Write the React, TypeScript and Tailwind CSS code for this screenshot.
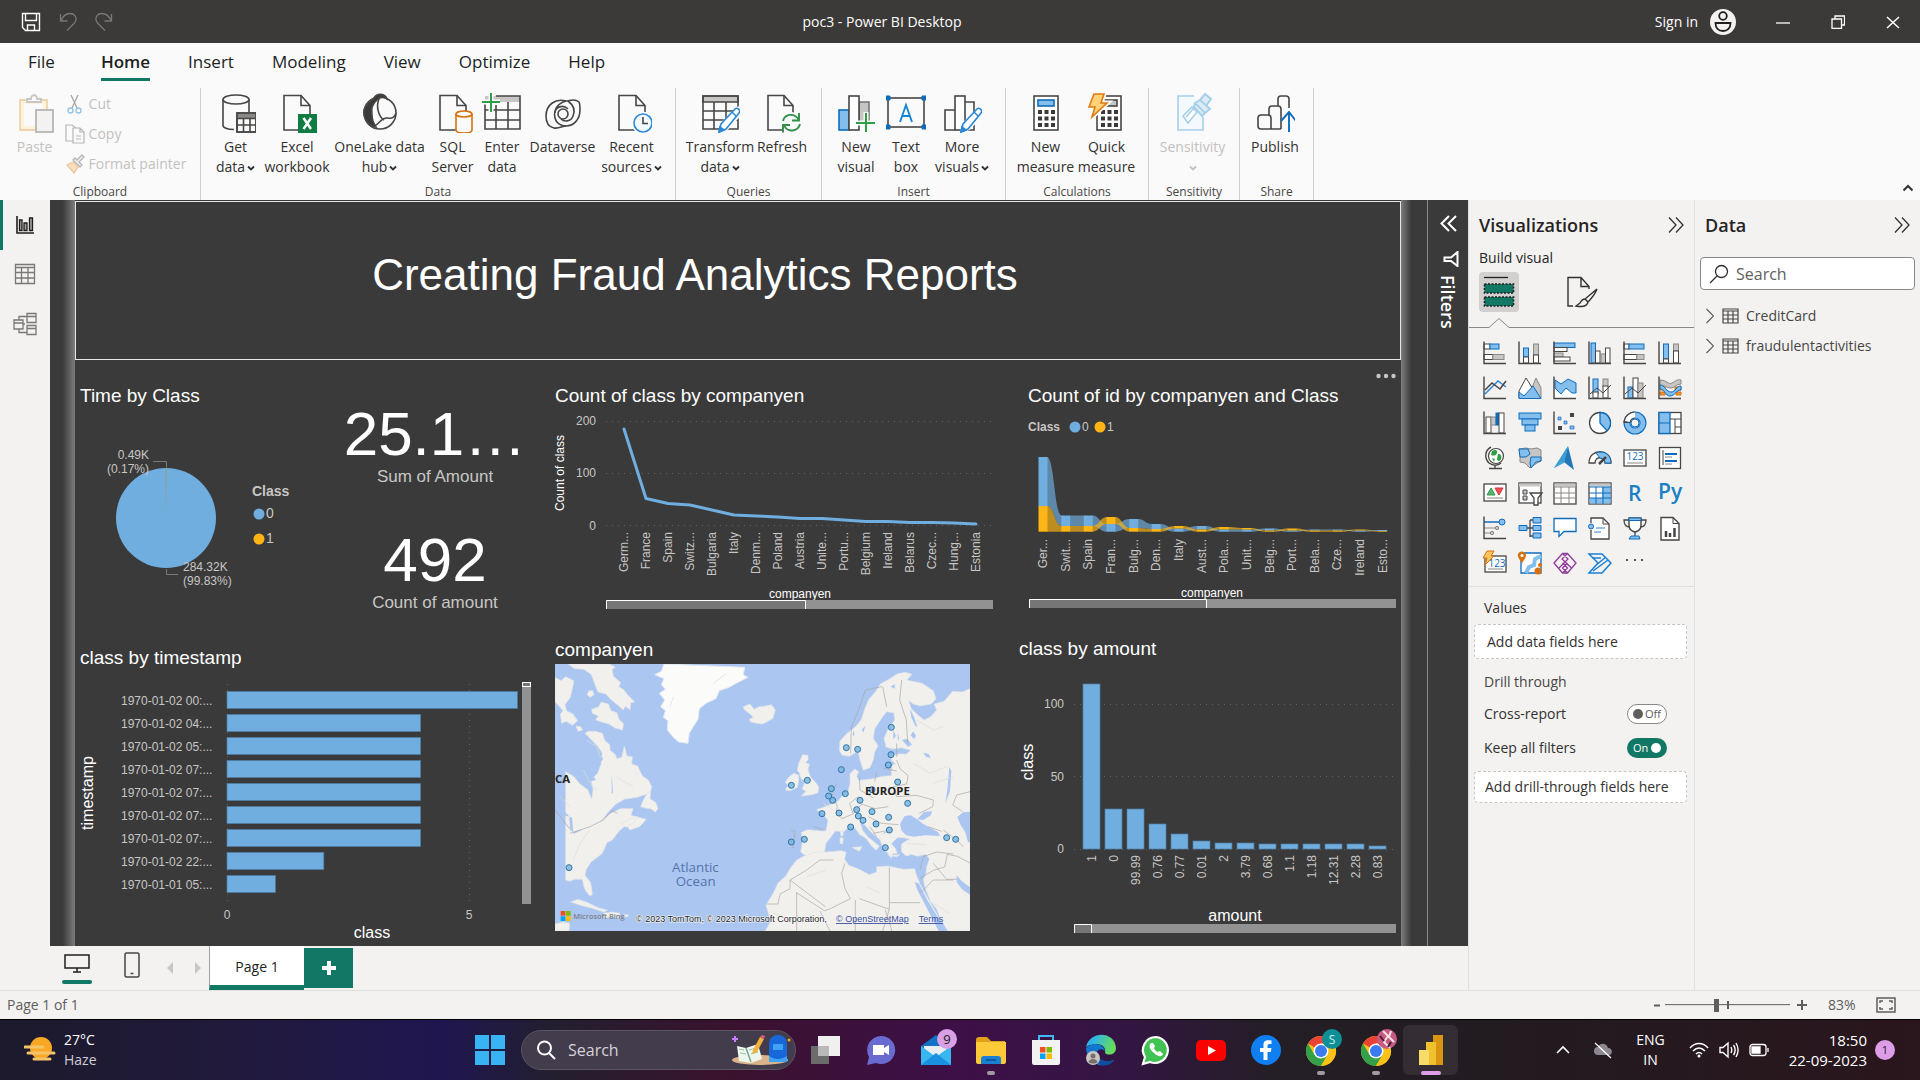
import React from "react";

type P = { children?: React.ReactNode };

const BLUE = "#70aee0";
const GOLD = "#fdb515";
const ARIAL = "'Liberation Sans', Arial, sans-serif";

/* ---------- Ribbon icons (40 x 40) ---------- */

function Ico({ children }: P) {
  return (
    <svg className="h-10 w-10" viewBox="0 0 40 40" fill="none" stroke="#484644" strokeWidth="1.6" aria-hidden="true">
      {children}
    </svg>
  );
}

const Doc = ({ fill = "#fafafa" }: { fill?: string }) => (
  <>
    <path d="M7 2.5h17l9 10V37H7z" fill={fill} />
    <path d="M24 2.5v10h9" />
  </>
);

const Pencil = () => (
  <>
    <path d="M20 39l2-8 15-15c2-2 6 1 4 4L27 35z" stroke="#fafafa" strokeWidth="3.5" fill="#fafafa" />
    <path d="M19 39l2-8L35 16c2-2 6 1 4 4L26 36z" stroke="#2b88d8" fill="#fff" />
    <path d="M19 39l1-5 4 3z" fill="#2b88d8" stroke="#2b88d8" />
    <path d="M32 19l4 4" stroke="#2b88d8" />
  </>
);

const icons: Record<string, React.ReactNode> = {
  get: (
    <Ico>
      <path d="M7 6.5v26c0 2 4 4 11 4M33 6.5V19" />
      <ellipse cx="20" cy="6.5" rx="13" ry="4.5" />
      <rect x="21" y="20" width="19" height="19" fill="#fafafa" />
      <path d="M21 23h19" strokeWidth="4" stroke="#8a8886" />
      <path d="M21 20h19v19H21zM21 25.5h19M21 32h19M27.5 25v14M34 25v14" />
    </Ico>
  ),
  excel: (
    <Ico>
      <Doc />
      <rect x="21" y="21" width="19" height="19" fill="#107c41" stroke="none" />
      <path d="M26.5 25l7.5 11M34 25l-7.5 11" stroke="#fff" strokeWidth="2.5" />
    </Ico>
  ),
  onelake: (
    <Ico>
      <circle cx="20" cy="20" r="16" />
      <path d="M14 5c3-5 11-5 13 1-3-2-7-2-10 1-5 4-6 9-5 15 0 5 2 9 4 12C6 33 1 20 6 13c2-3 5-5 8-8z" fill="#3b3a39" />
      <path d="M19 6c-3 7-1 17 5 21M14 33c7-2 6-9 14-8 4 1 7-1 8-5" />
    </Ico>
  ),
  sql: (
    <Ico>
      <Doc />
      <path d="M23 21v16c0 4 16 4 16 0V21" fill="#fafafa" stroke="#d8700f" />
      <ellipse cx="31" cy="21" rx="8" ry="3" stroke="#d8700f" fill="#fafafa" />
    </Ico>
  ),
  enter: (
    <Ico>
      <path d="M3 3h35v6H3z" fill="#c8c6c4" stroke="none" />
      <path d="M3 11v25h35V3H14M3 17h35M3 27h35M14 12v24M26 9v27" />
      <path d="M9 0v19M0 9h18" stroke="#fafafa" strokeWidth="5" />
      <path d="M9 0v19M0 9h18" stroke="#2f9e44" strokeWidth="2" />
    </Ico>
  ),
  dataverse: (
    <Ico>
      <path d="M36 9c-5-4-9-1-13-1C12 5 3 12 3 23c0 7 3 11 8 12 5 1 8-2 12-2 8 0 14-7 14-16 0-4 0-6-1-8z" />
      <circle cx="20" cy="21" r="5" />
      <path d="M23 8c-8 2-13 9-11 17 1 5 6 8 11 8M25 8c4 3 8 8 5 15-2 6-9 6-12 3M12 20c0-6 8-9 13-4" />
    </Ico>
  ),
  recent: (
    <Ico>
      <Doc />
      <circle cx="31" cy="30" r="10.5" fill="#fafafa" stroke="#fafafa" />
      <circle cx="31" cy="30" r="9" fill="#f3f9fd" stroke="#2b88d8" />
      <path d="M31 24v6.500h5" />
    </Ico>
  ),
  transform: (
    <Ico>
      <path d="M3 3h35v6H3z" fill="#c8c6c4" />
      <path d="M3 3h35v33H3zM3 18h35M3 27h35M14 9v27M26 9v27" />
      <Pencil />
    </Ico>
  ),
  refresh: (
    <Ico>
      <path d="M6 2.5h16l9 10V37H6z" />
      <path d="M22 2.5v10h9" />
      <circle cx="29" cy="30" r="11" fill="#fafafa" stroke="none" />
      <path d="M21 28c2-8 12-8 16-1M37 20v7.5h-7M38 31c-2 8-13 9-16 1M21 39.5V32h7" stroke="#2f8f46" strokeWidth="1.9" />
    </Ico>
  ),
  visual: (
    <Ico>
      <rect x="3" y="17" width="10" height="20" fill="#83beec" stroke="#0f6cbd" />
      <rect x="23" y="9" width="10" height="20" fill="#c8c6c4" stroke="#797775" />
      <rect x="13" y="3" width="10" height="34" fill="#fff" />
      <path d="M30 19v21M19 30h21" stroke="#fafafa" strokeWidth="5" />
      <path d="M30 20v19M20 30h19" stroke="#2f9e44" strokeWidth="2" />
    </Ico>
  ),
  text: (
    <Ico>
      <rect x="2" y="5" width="36" height="29" />
      <path d="M14 29l6-17 6 17M16 23h8" stroke="#1584d4" strokeWidth="1.9" />
      <path d="M0 3h4v4H0zM36 3h4v4h-4zM0 32h4v4H0zM36 32h4v4h-4z" fill="#0f6cbd" stroke="#0f6cbd" strokeWidth="1" />
    </Ico>
  ),
  more: (
    <Ico>
      <path d="M13 17H3v20h10M23 9h9v28h-9" />
      <rect x="13" y="3" width="10" height="34" fill="#fff" />
      <Pencil />
    </Ico>
  ),
  measure: (
    <Ico>
      <rect x="8" y="3" width="24" height="34" fill="#fff" />
      <rect x="12" y="7" width="16" height="6" fill="#83beec" stroke="#0f6cbd" />
      <path d="M12 19h4m2.500 0h4m2.500 0h4M12 25.500h4m2.500 0h4m2.500 0h4M12 32h4m2.500 0h4m2.500 0h4" strokeWidth="4" stroke="#3b3a39" />
    </Ico>
  ),
  quick: (
    <Ico>
      <rect x="10" y="3" width="24" height="34" fill="#fff" />
      <rect x="14" y="7" width="16" height="6" fill="#c8c6c4" />
      <path d="M14 19h4m2.500 0h4m2.500 0h4M14 25.500h4m2.500 0h4m2.500 0h4M14 32h4m2.500 0h4m2.500 0h4" strokeWidth="4" stroke="#3b3a39" />
      <path d="M7 1h10l-3 9h6L5 24l3-10H2z" fill="#fafafa" stroke="#fafafa" strokeWidth="5" />
      <path d="M7 1h10l-3 9h6L5 24l3-10H2z" fill="#ffd27a" stroke="#e07b12" />
    </Ico>
  ),
  sensitivity: (
    <Ico>
      <path d="M21 3H5v34h25V24" stroke="#a6cfe9" fill="#f3f9fd" />
      <path d="M10 23l9-9 5 5-9 11zM13 24l7-8" stroke="#a6cfe9" fill="#fff" />
      <path d="M22 10l5-3 10 9-5 4zM27 7l5-6 6 5-5 7M22 10l-1 4 8 9 3-3" stroke="#a6cfe9" strokeWidth="2" fill="#dcecf7" />
    </Ico>
  ),
  publish: (
    <Ico>
      <path d="M14 22v-6c0-2 1-3 3-3h6V6c0-2 1-3 3-3h5c2 0 3 1 3 3v9M23 13c2 0 3 1 3 3v20M3 25c0-2 1-3 3-3h7c2 0 3 1 3 3v11H6c-2 0-3-1-3-3zM16 36h10" />
      <path d="M34 39V20M26 28l8-9 7 9" stroke="#0f6cbd" strokeWidth="1.9" />
    </Ico>
  ),
};

const Caret = () => (
  <svg className="ml-0.5 inline-block h-2 w-2" viewBox="0 0 8 8" fill="none" stroke="currentColor" strokeWidth="1.8" aria-hidden="true">
    <path d="M1 2.500l3 3 3-3" />
  </svg>
);

function Tool({ icon, a, b, w, caret, off }: { icon: string; a: string; b?: string; w: string; caret?: boolean; off?: boolean }) {
  return (
    <button type="button" disabled={off} className={`${w} flex flex-col items-center text-center whitespace-nowrap ${off ? "text-[#c3c1bf]" : "text-[#323130]"}`}>
      {icons[icon]}
      <span className="mt-1 text-sm leading-5">
        {a}
        {(b || caret) && <br />}
        {b}
        {caret && <Caret />}
      </span>
    </button>
  );
}

function Group({ name, w, children }: { name: string; w: string; children: React.ReactNode }) {
  return (
    <section className={`${w} flex shrink-0 flex-col border-r border-[#d2d0ce]`}>
      <div className="flex flex-1 justify-center pt-[5px] pr-[3px]">{children}</div>
      <h2 className="text-center text-xs leading-4 text-[#484644]">{name}</h2>
    </section>
  );
}

function Ribbon() {
  return (
    <div className="flex h-[116px] items-start bg-[#fafafa] pt-1 shadow-[0_1px_0_#d2d0ce]">
      <div className="flex h-28 min-w-0">
        <Group name="Clipboard" w="w-[201px]">
          <button type="button" disabled className="flex w-12 flex-col items-center text-[#c3c1bf]">
            <svg className="h-10 w-10" viewBox="0 0 40 40" fill="none" strokeWidth="1.8" aria-hidden="true">
              <path d="M5 7h27v30H5z" stroke="#efd3ae" fill="#fdf3dc" />
              <path d="M9 11h19v22H9z" fill="#fafafa" stroke="none" />
              <path d="M12 9V6h4c0-5 6-5 6 0h4v3z" fill="#fafafa" stroke="#c8c6c4" />
              <rect x="21" y="17" width="17" height="22" fill="#f3f2f1" stroke="#b8b6b4" />
            </svg>
            <span className="mt-1 text-sm leading-5">Paste</span>
          </button>
          <div className="-mt-1 ml-1.5 flex flex-col text-sm leading-[30px] text-[#c3c1bf]">
            <button type="button" disabled className="flex items-center gap-1">
              <svg className="h-5 w-5" viewBox="0 0 20 20" fill="none" strokeWidth="1.3" aria-hidden="true">
                <path d="M6 1l6 13M13 1L7 14" stroke="#a8a6a4" />
                <circle cx="5.500" cy="16.500" r="2.500" stroke="#8fc3e6" />
                <circle cx="13.500" cy="16.500" r="2.500" stroke="#8fc3e6" />
              </svg>
              Cut
            </button>
            <button type="button" disabled className="flex items-center gap-1">
              <svg className="h-5 w-5" viewBox="0 0 20 20" fill="#fafafa" stroke="#b8b6b4" strokeWidth="1.2" aria-hidden="true">
                <path d="M1 1h6l4 3v13H1z" />
                <path d="M8 4h7l4 4v11H8zM15 4v4h4M11 12h5M11 15h5" />
              </svg>
              Copy
            </button>
            <button type="button" disabled className="flex items-center gap-1">
              <svg className="h-5 w-5" viewBox="0 0 20 20" fill="none" strokeWidth="1.3" aria-hidden="true">
                <path d="M2 11l6-3 5 5-4 6z" fill="#f9dfc0" stroke="#ecc79c" />
                <path d="M8 6l7 7 2-2-3-3 5-5-2-2-5 5-2-2z" fill="#eee" stroke="#b8b6b4" />
              </svg>
              Format painter
            </button>
          </div>
        </Group>
        <Group name="Data" w="w-[475px]">
          <Tool icon="get" a="Get" b="data" w="w-[58px]" caret />
          <Tool icon="excel" a="Excel" b="workbook" w="w-[65px]" />
          <Tool icon="onelake" a="OneLake data" b="hub" w="w-[100px]" caret />
          <Tool icon="sql" a="SQL" b="Server" w="w-[46px]" />
          <Tool icon="enter" a="Enter" b="data" w="w-[53px]" />
          <Tool icon="dataverse" a="Dataverse" w="w-[68px]" />
          <Tool icon="recent" a="Recent" b="sources" w="w-[70px]" caret />
        </Group>
        <Group name="Queries" w="w-[146px]">
          <Tool icon="transform" a="Transform" b="data" w="w-[70px]" caret />
          <Tool icon="refresh" a="Refresh" w="w-[54px]" />
        </Group>
        <Group name="Insert" w="w-[184px]">
          <Tool icon="visual" a="New" b="visual" w="w-[50px]" />
          <Tool icon="text" a="Text" b="box" w="w-[50px]" />
          <Tool icon="more" a="More" b="visuals" w="w-[62px]" caret />
        </Group>
        <Group name="Calculations" w="w-[143px]">
          <Tool icon="measure" a="New" b="measure" w="w-[62px]" />
          <Tool icon="quick" a="Quick" b="measure" w="w-[60px]" />
        </Group>
        <Group name="Sensitivity" w="w-[91px]">
          <Tool icon="sensitivity" a="Sensitivity" w="w-[70px]" caret off />
        </Group>
        <Group name="Share" w="w-[74px]">
          <Tool icon="publish" a="Publish" w="w-[60px]" />
        </Group>
      </div>
      <button type="button" aria-label="Collapse ribbon" className="mt-auto mr-1.5 mb-1.5 ml-auto">
        <svg className="h-3 w-3" viewBox="0 0 12 12" fill="none" stroke="#323130" strokeWidth="2" aria-hidden="true">
          <path d="M1.500 8.500L6 4l4.500 4.500" />
        </svg>
      </button>
    </div>
  );
}

function TitleBar() {
  return (
    <header className="grid h-[43px] shrink-0 grid-cols-[1fr_auto_1fr] items-center bg-[#3b3a39] text-sm text-white">
      <div className="flex items-center gap-[18px] pl-[21px]">
        <button type="button" aria-label="Save">
          <svg className="h-5 w-5" viewBox="0 0 20 20" fill="none" stroke="#fff" strokeWidth="1.4" aria-hidden="true">
            <path d="M1.500 1.500h17v17h-14l-3-3zM4.500 1.500v7h11v-7M6.500 18v-5h7v5" />
          </svg>
        </button>
        <button type="button" aria-label="Undo" disabled>
          <svg className="h-5 w-[18px]" viewBox="0 0 18 20" fill="none" stroke="#797775" strokeWidth="1.3" aria-hidden="true">
            <path d="M1.500 2v7h7M2 8.500C4 4 7 1.500 11 1.500c5 0 8 5 4.500 9.500L8 18.500" />
          </svg>
        </button>
        <button type="button" aria-label="Redo" disabled>
          <svg className="h-5 w-[18px]" viewBox="0 0 18 20" fill="none" stroke="#797775" strokeWidth="1.3" aria-hidden="true">
            <path d="M16.500 2v7h-7M16 8.500C14 4 11 1.500 7 1.500 2 1.500-1 6.500 2.500 11L10 18.500" />
          </svg>
        </button>
      </div>
      <h1 className="pr-[156px]">poc3 - Power BI Desktop</h1>
      <div className="flex items-center justify-end pr-5">
        <a href="#signin">Sign in</a>
        <svg className="ml-3 h-[26px] w-[26px]" viewBox="0 0 26 26" fill="none" stroke="#201f1e" strokeWidth="1.8" aria-hidden="true">
          <circle cx="13" cy="13" r="13" fill="#f3f2f1" stroke="none" />
          <circle cx="13" cy="7" r="3.8" />
          <path d="M5.500 14h15c0 5-3 8-7.500 8s-7.500-3-7.500-8z" />
        </svg>
        <button type="button" aria-label="Minimize" className="ml-10">
          <svg className="h-3.5 w-3.5" viewBox="0 0 14 14" stroke="#fff" strokeWidth="1.3" aria-hidden="true"><path d="M0 8h14" /></svg>
        </button>
        <button type="button" aria-label="Restore" className="ml-[41px]">
          <svg className="h-3.5 w-3.5" viewBox="0 0 14 14" fill="none" stroke="#fff" strokeWidth="1.3" aria-hidden="true">
            <path d="M1 4h9.500v9.500H1zM4 4V1h9.500v9H10.500" />
          </svg>
        </button>
        <button type="button" aria-label="Close" className="ml-[41px]">
          <svg className="h-3.5 w-3.5" viewBox="0 0 14 14" stroke="#fff" strokeWidth="1.5" aria-hidden="true"><path d="M1 2l12 11M13 2L1 13" /></svg>
        </button>
      </div>
    </header>
  );
}

function MenuTabs() {
  return (
    <nav className="flex h-[41px] shrink-0 items-start bg-[#fafafa] pl-7 text-[17px] leading-6 text-[#201f1e]">
      <a href="#file" className="mr-[46px] pt-[7px]">File</a>
      <div className="flex gap-[38px]">
        <a href="#home" aria-current="page" className="flex flex-col pt-[7px] font-semibold">
          Home
          <span className="mt-1 h-[3px] bg-[#117865]" />
        </a>
        {["Insert", "Modeling", "View", "Optimize", "Help"].map((t) => (
          <a key={t} href={`#${t}`} className="pt-[7px]">{t}</a>
        ))}
      </div>
    </nav>
  );
}

/* ---------- Charts: each viewBox uses the report's own coordinates ---------- */

const lab = { fontFamily: ARIAL, fontSize: 12, fill: "#c8c6c4" } as const;

function Title({ children, x }: { children: React.ReactNode; x: string }) {
  return <h2 className={`${x} pt-[22px] text-[19px] leading-7 text-white`}>{children}</h2>;
}

function Pie() {
  return (
    <svg className="block h-auto w-full" viewBox="75 410 250 212" role="img" aria-label="Time by Class pie chart">
      <circle cx="166" cy="518" r="50" fill={BLUE} />
      <path d="M166 518l-.6-50h1z" fill="#a09a6a" />
      <path d="M153 461.500h13.500v6M166.500 569v5.500H178" fill="none" stroke="#7a7876" />
      <g {...lab}>
        <text x="149" y="459" textAnchor="end">0.49K</text>
        <text x="149" y="473" textAnchor="end">(0.17%)</text>
        <text x="183" y="571">284.32K</text>
        <text x="183" y="585">(99.83%)</text>
      </g>
      <g {...lab} fontSize={14}>
        <text x="252" y="496" fontWeight="bold">Class</text>
        <text x="266" y="518">0</text>
        <text x="266" y="543">1</text>
      </g>
      <circle cx="259" cy="514" r="5.500" fill={BLUE} />
      <circle cx="259" cy="539" r="5.500" fill={GOLD} />
    </svg>
  );
}

const times = ["02 00", "02 04", "02 05", "02 07", "02 07", "02 07", "02 07", "02 22", "01 05"];
const timeVals = [6, 4, 4, 4, 4, 4, 4, 2, 1];

function TimeBars() {
  return (
    <svg className="block h-auto w-full" viewBox="75 672 470 274" role="img" aria-label="class by timestamp bar chart">
      <path d="M227.500 684v220M469.500 684v220" stroke="#626160" strokeDasharray="1 5" />
      {times.map((t, i) => (
        <g key={i}>
          <text {...lab} x="121" y={705 + i * 23}>{`1970-01-${t}:...`}</text>
          <rect x="227" y={691.5 + i * 23} width={timeVals[i] * 48.4} height="17" fill={BLUE} stroke="#4f7ea6" strokeWidth=".7" />
        </g>
      ))}
      <g {...lab} textAnchor="middle">
        <text x="227" y="919">0</text>
        <text x="469" y="919">5</text>
      </g>
      <text x="372" y="938" fontFamily={ARIAL} fontSize="16" fill="#fff" textAnchor="middle">class</text>
      <text transform="translate(93 793) rotate(-90)" fontFamily={ARIAL} fontSize="16" fill="#fff" textAnchor="middle">timestamp</text>
      <rect x="522" y="682" width="9" height="222" fill="#929292" />
      <rect x="522.500" y="682.500" width="8" height="4" fill="#767676" stroke="#fff" />
    </svg>
  );
}

const lineNames = ["Germ...", "France", "Spain", "Switz...", "Bulgaria", "Italy", "Denm...", "Poland", "Austria", "Unite...", "Portu...", "Belgium", "Ireland", "Belarus", "Czec...", "Hung...", "Estonia"];
const lineYs = [429, 498.5, 503.5, 505, 510, 515, 516, 517, 518.5, 518.5, 520, 521.5, 521.5, 522.5, 522.5, 523, 524];

function LineChart() {
  return (
    <svg className="block h-auto w-full" viewBox="545 410 460 224" role="img" aria-label="Count of class by companyen line chart">
      <path d="M606 421.500h387M606 473.500h387M606 525.500h387" stroke="#626160" strokeDasharray="1 5" />
      <polyline points={lineYs.map((y, i) => `${624 + i * 22},${y}`).join(" ")} fill="none" stroke={BLUE} strokeWidth="3" strokeLinejoin="round" strokeLinecap="round" />
      <g {...lab} textAnchor="end">
        <text x="596" y="425">200</text>
        <text x="596" y="477">100</text>
        <text x="596" y="530">0</text>
        {lineNames.map((n, i) => (
          <text key={n} transform={`translate(${628 + i * 22} 532) rotate(-90)`}>{n}</text>
        ))}
      </g>
      <text transform="translate(564 473) rotate(-90)" fontFamily={ARIAL} fontSize="12" fill="#fff" textAnchor="middle">Count of class</text>
      <text x="800" y="598" fontFamily={ARIAL} fontSize="12" fill="#fff" textAnchor="middle">companyen</text>
      <rect x="606" y="600" width="387" height="9" fill="#929292" />
      <path d="M606.500 609v-8.500h199v8.500" fill="#767676" stroke="#fff" />
    </svg>
  );
}

const ribNames = ["Ger...", "Swit...", "Spain", "Fran...", "Bulg...", "Den...", "Italy", "Aust...", "Pola...", "Unit...", "Belg...", "Port...", "Bela...", "Cze...", "Ireland", "Esto..."];
/* [top edge, divider, series on top: 0 blue / 1 gold] */
const rib: [number, number, number][] = [
  [457, 506, 0], [515.5, 526, 0], [515.5, 526, 0], [517, 524, 1], [519, 528, 0], [524, 529, 0], [526, 528.5, 1], [526, 529.5, 0],
  [527, 529.5, 1], [528, 529.5, 1], [528.5, 530.5, 0], [528.5, 530.5, 1], [529.5, 530.5, 0], [529.5, 530.5, 0], [529.5, 530.5, 1], [530, 531, 0],
];
const RB = 531.7;
const span = (i: number, s: number) => (rib[i][2] === s ? [rib[i][0], rib[i][1]] : [rib[i][1], RB]);
const rx = (i: number) => 1043 + i * 22.65;

function RibbonChart() {
  return (
    <svg className="block h-auto w-full" viewBox="1005 410 396 225" role="img" aria-label="Count of id by companyen and Class ribbon chart">
      <g {...lab}>
        <text x="1028" y="431" fontWeight="bold">Class</text>
        <text x="1082" y="431">0</text>
        <text x="1107" y="431">1</text>
      </g>
      <circle cx="1075" cy="427" r="5.500" fill={BLUE} />
      <circle cx="1100" cy="427" r="5.500" fill={GOLD} />
      {[0, 1].map((s) =>
        rib.slice(1).map((_, k) => {
          const [a, b] = span(k, s);
          const [c, d] = span(k + 1, s);
          const x0 = rx(k) + 4;
          const x1 = rx(k + 1) - 4;
          const m = (x0 + x1) / 2;
          return (
            <path key={`${s}-${k}`} d={`M${x0} ${a}C${m} ${a} ${m} ${c} ${x1} ${c}V${d}C${m} ${d} ${m} ${b} ${x0} ${b}Z`} fill={s ? GOLD : BLUE} opacity=".68" />
          );
        }),
      )}
      {rib.map((_, i) =>
        [0, 1].map((s) => {
          const [a, b] = span(i, s);
          return <rect key={`${i}-${s}`} x={rx(i) - 4.5} y={a} width="9" height={b - a} fill={s ? GOLD : BLUE} />;
        }),
      )}
      <g {...lab} textAnchor="end">
        {ribNames.map((n, i) => (
          <text key={n} transform={`translate(${Math.round(rx(i)) + 4} 539) rotate(-90)`}>{n}</text>
        ))}
      </g>
      <text x="1212" y="597" fontFamily={ARIAL} fontSize="12" fill="#fff" textAnchor="middle">companyen</text>
      <rect x="1029" y="599" width="367" height="9" fill="#929292" />
      <path d="M1029.500 608v-8.500h177v8.500" fill="#767676" stroke="#fff" />
    </svg>
  );
}

const amtNames = ["1", "0", "99.99", "0.76", "0.77", "0.01", "2", "3.79", "0.68", "1.1", "1.18", "12.31", "2.28", "0.83"];
const amtH = [165, 40, 40, 25, 15, 8, 6, 6, 5, 5, 5, 5, 5, 3];

function AmountChart() {
  return (
    <svg className="block h-auto w-full" viewBox="1005 663 396 283" role="img" aria-label="class by amount column chart">
      <path d="M1074 704.500h320M1074 776.500h320M1074 849.500h320" stroke="#626160" strokeDasharray="1 5" />
      {amtH.map((h, i) => (
        <rect key={i} x={1083 + i * 22} y={849 - h} width="17" height={h} fill={BLUE} stroke="#4f7ea6" strokeWidth=".7" />
      ))}
      <g {...lab} textAnchor="end">
        <text x="1064" y="708">100</text>
        <text x="1064" y="781">50</text>
        <text x="1064" y="853">0</text>
        {amtNames.map((n, i) => (
          <text key={n} transform={`translate(${1096 + i * 22} 855) rotate(-90)`}>{n}</text>
        ))}
      </g>
      <text transform="translate(1033 762) rotate(-90)" fontFamily={ARIAL} fontSize="16" fill="#fff" textAnchor="middle">class</text>
      <text x="1235" y="921" fontFamily={ARIAL} fontSize="16" fill="#fff" textAnchor="middle">amount</text>
      <rect x="1074" y="924" width="322" height="9" fill="#929292" />
      <path d="M1074.500 933v-8.500h17v8.500" fill="#767676" stroke="#fff" />
    </svg>
  );
}

const pins = [
  [1054, 292], [919, 353], [953, 358], [1053, 374], [1045, 405], [904, 419], [802, 451], [754, 466], [1073, 456], [874, 476], [866, 498], [878, 511],
  [916, 491], [996, 479], [960, 511], [1103, 520], [846, 551], [897, 549], [950, 539], [955, 558], [969, 571], [996, 545], [1046, 562], [1008, 582],
  [1048, 600], [932, 591], [793, 628], [754, 636], [1036, 653], [1220, 623], [1247, 628], [87, 713],
];

function WorldMap() {
  return (
    <svg className="block h-auto w-full" viewBox="45 102 1245 801" role="img" aria-label="Map of companyen locations">
      <rect x="45" y="102" width="1245" height="801" fill="#abc6f1" />
      <g fill="#f1f0ed" stroke="#dfe3e6" strokeWidth="2" strokeLinejoin="round">
        <path d="M84 102l20 14 28 2 22 16 8 22 12 30 24 6 14 16 22 18 16 14 6-12 14 12 2-22 12-2-20-20-14-18-14-8 6-12-22-20-4-20 10-6-18-10z" />
        <path d="M155 238l22-8 6-14 22 6 8 20 18 6 6 20 14 14-4 18-22-6-18-12-22-6-18-6 8-12-18-8z" />
        <path d="M45 142l18 10 14-12 24 12-2 16-8 34-16 22 4 18 20 10 14 20-16 14-18-12-14 6-4-28 8-10-14-16-10-10z" />
        <path d="M146 182l12 0 4 12-12 8-8-8zM108 288l14 2 6 10-14 4z" />
        <path d="M135 310l10-6 22 0 20 6 8 22 14 12 2 18 14 10 6 14 14-4 8-34 8 30 16 2-2 22 18 6 14 30 18 12 10 20-4 18-16 6-24 8-38 6-28 16-20 22-22 28 26-22 32-16 38 0-6 20 22 6 24 6-20 22-30 10-10-16-24 22-18 24-16 8-8 20-8 14-16 12-16 12-14 22-4 18 16 20 4 18 2 20-8 4-12-16-6-14-4-20-22 0-16 6-12-4V425l24 14 18 22 24 18 12 28 4-28-6-28 20-22 10-26 4-34-14-20z" />
        <path d="M302 530l8-20 14-24 8 0-2 20 18 12 6 18-8 10-14-10-18-2zM240 580l20-8 22-12 12 0-14 18-22 14z" />
        <path d="M92 816l22-8 30 10 32 16 26 6-10 6-30-10-40-10zM190 850l26-4 24 4-4 14-24-4-20 4zM45 882l24-6 20 4-2 23H45zM250 854l14 0v6h-14z" />
        <path d="M630 252l-18-14-2-8 20-8 12 16 16-8 20-2 16-4 12 16-8 26-30 16-18-2-18-4-4-8 12-6z" />
        <path d="M788 374l16 2 0 14-8 8 12 4-4 18 8 22 14 14 10 14-2 18-18 6-32 4 14-14-12-8 8-16 2-10-12-2-6-20-6-6 4-22zM748 440l14-10 14 6 0 16-4 20-22 10-14-2 8-14-8-10zM900 600l8-2 2 16-6 6zM900 624l10 0-2 18-8-2zM936 652l30-2-8 14zM1046 676l34-2-10 6zM1096 672l18-4-8 10z" />
        <path d="M1100 150l46 10 34 22 8 24-14 16-34 6-20-6-14-10 8 24 14 14 24 20 20-10 18-20-8-18 30-8 26-30 28 2 24-10V903h-66l-22-34-12-32-18-22-16-40-6-26 8-18 2-20 8-24-10-14-26 6-18-6-16 4-14-12 0-22 14-10 12-6-20-4-18 0-12 12-6 6 12 14 6 16-14 0-4 14-12-16-14-14-8-26-22-18-26-28-12-6 8 24 16 20 20 16 14 12-10 12-14-14-16-22-18-10-16-22-16-4-16 16-26-2-10 14-18 22-4 24-16 20-22 6-14-10-14-8-6-6 6-34-4-24 20-8 36 4 18 0 6-32-16-20-18-12 28-10 34-14 14-16 18-14 6-24 0-30 14-14 12 8-6 14 6 12 38-4 34-8 26-2 2-30 10-6-12-10 2-14 24-6 18 2 14-12-28-8-26 4-20-6-6-26 14-32 18-22-2-22-22-4-14 18-22 34-4 28 14 22-10 20-4 22-10 24-20 8-10-30-6-28-26 16-22-4-8-14 2-28 18-20 28-22 18-22 10-32 12-28 20-24 16-24 30-16 20-14 24-4 20 6z" />
        <path d="M770 690l22-12 38-12 30 0 44-4 14 4-4 22 12 18 32 12 30 16 22-8 0-16 34-2 46 10 34-2 4 16 12 30 22 40 32 56 6 45H676l16-30-14-48 22-36 14-30 24-22 14-24z" />
      </g>
      <path d="M372 102l-8 22-20 10 28 12-8 18 12 14-18 12 16 20-12 20 14 12-6 20 14 10-2 28 18 22 16 14 28 4 4-30 12-20 14-22 4-32 20-16 30-14 10-24 30-10 24-14 32-16-14-8 4-22z" fill="#fbfbfa" stroke="#e3e9f0" strokeWidth="3" />
      <g fill="#abc6f1">
        <path d="M1084 600l-4-18 14-24 18-2 20 12 14 12 22 12 26 14 6 12-44-2-34 4-24-4zM1132 568l20-22 24-2-4 12-22 14zM1290 545l-20 2-18 14 10 24 14 22 8 30 6 0zM1250 736l14 16 26 20v22l-24-16-16-22zM1124 756l12 4 26 50 34 56 24 37h-24l-32-62-32-62z" />
        <path d="M1086 330l16-4 14 18-12 6zM1112 316l8-12 8 14-6 10zM1110 236l12 24 10 30-6-2-12-26zM1150 368l16 4 6 12-14-4zM45 520l24 20 20 20-22-6-22-18zM88 562l8 0 4 46-10-14zM100 606l28-8-26 14zM175 388l16-6-6 12zM150 446l12-4 6 8-14 4zM215 430l4 60-4 0zM1052 170l12-8 0 14z" />
        <path d="M940 300l4 14-6 4zM966 298l10-10-6 20zM1060 300l8 18-8 10zM1072 310l6 14-4 8zM1228 410l-6 70-6 40 14-36 4-60z" />
      </g>
      <g fill="none" stroke="#a9a6a3" strokeWidth="2">
        <path d="M90 610l60-20 40-20 26-28 16 8M45 540l50 64M932 370l2-80 22-50 20-60 50-10M1028 170l12 60M1085 150l-6 60 20 60 4 70M1070 340l0 40M1030 415l40 8M1070 390l10 26 24 20-4 26-40 8M1010 425l-6 30M958 440l2 40 40 24M955 500l-26 20 10 30M890 460l-14 30 16 40-4 20 20 16M820 590l30 8M752 600l14 4-8 50M905 566l34-14 26-30 40 14 40-6M1060 470l10 30 60-4 50 14-2 20-40 20M985 560l40 20 50 4M990 590l20 30M1000 610l40-8M1030 610l20-8M1048 712v106h92M1048 818v20l-90-32M915 700l-10 30 10 46 16 30-60 30-18 6-84-54M770 786v117M880 690l-40 0-40 30-50 30 0 26-30 16-6 30-34 0M750 750l106 80M946 810v93M1048 838l-20 65M1140 720l10-40 40-14 50 6M1140 745l40-24 34-10 8-38 30 6 38 20M1180 700l40 48 30 0M1140 790l40-40 60 0M1210 600l40 30 20 20M1165 590l40 14M1290 485l-40 10-12 30 30 20M1036 840l20 63M870 903l-30-60" />
      </g>
      <g fill="none" stroke="#dcdcda" strokeWidth="2">
        <path d="M130 420l20 40 20 20M230 440l30 20 20 10M150 600l-30 40-20 50M60 500l30 30M140 330l30 20 10 30M1130 270l50 30 30-10M1120 400l50 30 50-20M800 740l60-20M700 850l60 20M980 770l40 20M1180 820l50 30M1180 460l60-20M850 520l30 20M1100 640l60 4M400 200l-10 30M560 130l-40 30" />
      </g>
      <text x="45" y="458" fontFamily="'Open Sans', sans-serif" fontWeight="bold" fontSize="34" fill="#222">CA</text>
      <g fontFamily="'Open Sans', sans-serif" fontSize="40" fill="#5673ac" textAnchor="middle">
        <text x="466" y="727">Atlantic</text>
        <text x="467" y="767">Ocean</text>
      </g>
      <g fill="#7ab5dc" fillOpacity=".85" stroke="#2f74a8" strokeWidth="3">
        {pins.map(([x, y]) => (
          <circle key={`${x}-${y}`} cx={x} cy={y} r="9" />
        ))}
      </g>
      <text x="1042" y="495" fontFamily="'Open Sans', sans-serif" fontWeight="bold" fontSize="34" fill="#222" textAnchor="middle">EUROPE</text>
      <path d="M62 843h14v14H62z" fill="#f25022" />
      <path d="M78 843h14v14H78z" fill="#7fba00" />
      <path d="M62 859h14v14H62z" fill="#00a4ef" />
      <path d="M78 859h14v14H78z" fill="#ffb900" />
      <text x="100" y="868" fontFamily="'Open Sans', sans-serif" fontWeight="600" fontSize="22" fill="#7c8088">Microsoft Bing</text>
      <g fontFamily={ARIAL} fontSize="27">
        <text x="288" y="876" fill="#222" stroke="#fff" strokeWidth="3" paintOrder="stroke">© 2023 TomTom, © 2023 Microsoft Corporation,</text>
        <a href="#osm"><text x="888" y="876" fill="#3a4fa3" textDecoration="underline">© OpenStreetMap</text></a>
        <a href="#terms"><text x="1136" y="876" fill="#3a4fa3" textDecoration="underline">Terms</text></a>
      </g>
    </svg>
  );
}

function Card({ value, label }: { value: string; label: string }) {
  return (
    <div className="text-center">
      <p className="text-[62px] leading-[62px] text-white">{value}</p>
      <p className="text-[17px] leading-6 text-[#c8c6c4]">{label}</p>
    </div>
  );
}

function Report() {
  return (
    <div className="flex min-w-0 flex-1 overflow-hidden bg-[#3a3a3a] font-['Liberation_Sans',Arial,sans-serif]">
      <div className="w-[25px] shrink-0 bg-linear-to-r from-[#3a3a3a] from-50% to-[#7d7d7d]" />
      <main className="relative min-w-0 flex-1 pt-px">
        <div className="flex h-[159px] items-center justify-center border border-[#e6e6e6] pr-[86px] pb-3">
          <h1 className="text-[44px] leading-[52px] text-white">Creating Fraud Analytics Reports</h1>
        </div>
        <button type="button" aria-label="More options" className="absolute top-[173px] right-[5px]">
          <svg className="h-1.5 w-5" viewBox="0 0 20 6" fill="#c8c6c4" aria-hidden="true">
            <circle cx="2.500" cy="3" r="2.200" /><circle cx="10" cy="3" r="2.200" /><circle cx="17.500" cy="3" r="2.200" />
          </svg>
        </button>
        <div className="grid grid-cols-[470fr_460fr_396fr]">
          <div>
            <div className="grid grid-cols-[250fr_220fr]">
              <section>
                <Title x="pl-[5px]">Time by Class</Title>
                <Pie />
              </section>
              <div className="flex flex-col gap-10 pt-[43px]">
                <Card value="25.1…" label="Sum of Amount" />
                <Card value="492" label="Count of amount" />
              </div>
            </div>
            <section>
              <Title x="pl-[5px]">class by timestamp</Title>
              <TimeBars />
            </section>
          </div>
          <div>
            <section>
              <Title x="pl-2.5">Count of class by companyen</Title>
              <LineChart />
            </section>
            <section className="pr-[35px] pl-2.5">
              <h2 className="pt-0.5 text-[19px] leading-7 text-white">companyen</h2>
              <WorldMap />
            </section>
          </div>
          <div>
            <section>
              <Title x="pl-[23px]">Count of id by companyen and Class</Title>
              <RibbonChart />
            </section>
            <section>
              <h2 className="pl-3.5 text-[19px] leading-7 text-white">class by amount</h2>
              <AmountChart />
            </section>
          </div>
        </div>
      </main>
      <div className="w-[26px] shrink-0 bg-linear-to-r from-[#7d7d7d] to-[#3a3a3a] to-40%" />
    </div>
  );
}

function SideNav() {
  return (
    <nav className="flex w-[50px] shrink-0 flex-col bg-[#f3f2f1]">
      <button type="button" aria-label="Report view" className="flex h-[50px] items-center justify-center border-l-[3px] border-[#117865] pr-[3px]">
        <svg className="h-5 w-5" viewBox="0 0 20 20" fill="none" stroke="#201f1e" strokeWidth="1.3" aria-hidden="true">
          <path d="M2 1v17h17" strokeWidth="1.6" />
          <path d="M4.500 5h2.500v10.500H4.500zM9 8h3v7.500H9zM14.500 3h3v12.500h-3z" fill="#a19f9d" />
        </svg>
      </button>
      <button type="button" aria-label="Table view" className="flex h-12 items-center justify-center">
        <svg className="h-[22px] w-[22px]" viewBox="0 0 22 22" fill="none" stroke="#7a7876" strokeWidth="1.3" aria-hidden="true">
          <path d="M1.500 1.500h19v19h-19zM1.500 4.500h19M1.500 9.500h19M1.500 15h19M7.500 4.500v16M14 4.500v16" />
        </svg>
      </button>
      <button type="button" aria-label="Model view" className="flex h-[52px] items-center justify-center">
        <svg className="h-6 w-6" viewBox="0 0 24 24" fill="none" stroke="#7a7876" strokeWidth="1.3" aria-hidden="true">
          <path d="M1 8h9v9H1zM1 11h9M14 1.500h9v9h-9zM14 4.500h9M14 13.500h9v9h-9zM14 16.500h9M6 8V4.500h8M6 17v3.500h8M10 12h2" />
        </svg>
      </button>
    </nav>
  );
}

function FiltersPane() {
  return (
    <aside className="flex w-[41px] shrink-0 flex-col items-center border-l border-[#8a8886] bg-[#3a3a3a] pt-[15px] text-white">
      <button type="button" aria-label="Expand filters">
        <svg className="h-[17px] w-[17px]" viewBox="0 0 17 17" fill="none" stroke="#fff" strokeWidth="2" aria-hidden="true">
          <path d="M9 1L1.500 8.500 9 16M16 1L8.500 8.500 16 16" />
        </svg>
      </button>
      <svg className="mt-[19px] ml-1.5 h-4 w-4" viewBox="0 0 16 16" fill="none" stroke="#fff" strokeWidth="2" aria-hidden="true">
        <path d="M14.500 1v14L8 10H1.500V6.500H8z" />
      </svg>
      <h2 className="mt-2 text-lg leading-5 font-semibold [writing-mode:vertical-rl]">Filters</h2>
    </aside>
  );
}

/* ---------- Visualization gallery icons (24 x 24) ---------- */

const K = "#484644";
const B = "#83beec";
const S = "#0f6cbd";
const Gy = "#c8c6c4";
const Gs = "#8a8886";
const Ax = () => <path d="M1 .5V22.500H23" stroke={K} strokeWidth="1.4" />;

const gallery: [string, React.ReactNode][] = [
  ["Stacked bar chart", <><rect x="1" y="3" width="6" height="5" fill="#fff" /><rect x="7" y="3" width="9" height="5" fill={B} stroke={S} /><rect x="1" y="13.500" width="9" height="5" fill="#fff" /><rect x="10" y="13.500" width="11" height="5" fill={Gy} stroke={Gs} /><Ax /></>],
  ["Stacked column chart", <><rect x="5.500" y="7" width="5" height="9" fill={B} stroke={S} /><rect x="5.500" y="16" width="5" height="6" fill="#fff" /><rect x="15.500" y="3" width="5" height="11" fill={Gy} stroke={Gs} /><rect x="15.500" y="14" width="5" height="8" fill="#fff" /><Ax /></>],
  ["Clustered bar chart", <><rect x="1" y="2" width="21" height="4.500" fill={B} stroke={S} /><rect x="1" y="6.500" width="13" height="4" fill="#fff" /><rect x="1" y="12" width="9" height="4" fill={Gy} stroke={Gs} /><rect x="1" y="16" width="16" height="4" fill="#fff" /><Ax /></>],
  ["Clustered column chart", <><rect x="3" y="2" width="4.500" height="20" fill={B} stroke={S} /><rect x="7.500" y="10" width="4.500" height="12" fill="#fff" /><rect x="13" y="13" width="4.500" height="9" fill={Gy} stroke={Gs} /><rect x="17.500" y="7" width="4.500" height="15" fill="#fff" /><Ax /></>],
  ["100% stacked bar chart", <><rect x="1" y="3" width="5" height="5" fill="#fff" /><rect x="6" y="3" width="15" height="5" fill={B} stroke={S} /><rect x="1" y="13.500" width="13" height="5" fill="#fff" /><rect x="14" y="13.500" width="7" height="5" fill={Gy} stroke={Gs} /><Ax /></>],
  ["100% stacked column chart", <><rect x="5.500" y="3" width="5" height="15" fill={B} stroke={S} /><rect x="5.500" y="18" width="5" height="4" fill="#fff" /><rect x="15.500" y="3" width="5" height="7" fill={Gy} stroke={Gs} /><rect x="15.500" y="10" width="5" height="12" fill="#fff" /><Ax /></>],
  ["Line chart", <><path d="M2 18l13-13 8 6" stroke="#2b88d8" strokeWidth="1.5" /><path d="M2 14l7-7 8 6 6-8" stroke={K} strokeWidth="1.5" /><Ax /></>],
  ["Area chart", <><path d="M13 14L18 2l5 10v10z" fill={Gy} stroke={Gs} /><path d="M1 15L8 2l7 11-6 9H1z" fill="#fff" stroke={K} /><path d="M1 16l5 4 9-10 8 12.500H1z" fill={B} stroke={S} /></>],
  ["Stacked area chart", <><path d="M2 4l5 5 8-5 8 3v15H2z" fill="#fff" stroke="none" /><path d="M2 4l6 4 7-5 8 4v10h-4l-6-5-5 6-6-6z" fill={B} stroke={S} /><Ax /></>],
  ["Line and stacked column chart", <><rect x="5" y="3" width="5" height="15" fill={B} stroke={S} /><rect x="5" y="16" width="5" height="6" fill="#fff" /><rect x="15" y="3" width="5" height="8" fill={Gy} stroke={Gs} /><rect x="15" y="10" width="5" height="12" fill="#fff" /><path d="M2 18l7-6 6 5 8-8" stroke={K} /><Ax /></>],
  ["Line and clustered column chart", <><rect x="5" y="11" width="5" height="11" fill={B} stroke={S} /><rect x="10" y="2" width="5" height="20" fill="#fff" /><rect x="15" y="7" width="5" height="15" fill={Gy} stroke={Gs} /><path d="M2 18l7-6 6 5 8-8" stroke={K} /><Ax /></>],
  ["Ribbon chart", <><path d="M2 4c7 0 8 5 12 3s5-4 9-3v4c-5 0-6 4-10 4S6 9 2 9z" fill={Gy} stroke={Gs} /><path d="M2 11h5v3H2zM17 11h6v3h-6zM2 16h5v3H2zM18 16h5v3h-5z" fill="#f0932b" stroke="#d8700f" /><path d="M2 9c5 0 6 7 11 7s5-6 10-6v4c-5 0-6 6-11 6S7 13 2 13z" fill={B} stroke={S} /><Ax /></>],
  ["Waterfall chart", <><rect x="3" y="6" width="5" height="16" fill="#fff" stroke={K} /><rect x="8" y="6" width="5" height="8" fill={Gy} stroke={Gs} /><rect x="13" y="2" width="3" height="12" fill={S} stroke={S} /><rect x="16" y="2" width="5" height="20" fill="#fff" stroke={K} /><Ax /></>],
  ["Funnel chart", <><rect x="1" y="2" width="22" height="6" fill={B} stroke={S} /><rect x="4" y="8" width="16" height="6" fill={B} stroke={S} /><rect x="7" y="14" width="10" height="6" fill={B} stroke={S} /></>],
  ["Scatter chart", <><path d="M17 2h4v4h-4zM5 15h4v4H5z" fill={K} stroke="none" /><path d="M5 6h3v3H5zM11 10h3v3h-3zM17 15h4v3h-4z" fill={B} stroke={S} strokeWidth=".7" /><Ax /></>],
  ["Pie chart", <><circle cx="12" cy="12" r="10.500" fill="#fff" stroke={K} strokeWidth="1.3" /><path d="M12 1.500a10.500 10.500 0 017 18.200L12 12z" fill={B} stroke={S} strokeWidth="1.3" /></>],
  ["Donut chart", <><circle cx="12" cy="12" r="8" stroke={S} strokeWidth="7" /><circle cx="12" cy="12" r="8" stroke={B} strokeWidth="4.8" /><path d="M12 4A8 8 0 004 12" stroke={K} strokeWidth="7" /><path d="M12 4A8 8 0 004.300 10.500" stroke="#fff" strokeWidth="4.8" /><circle cx="12" cy="12" r="4" fill="#f3f2f1" stroke={S} /></>],
  ["Treemap", <><rect x="1" y="1.500" width="22" height="21" fill="#fff" stroke={K} strokeWidth="1.3" /><rect x="1" y="1.500" width="11" height="21" fill={B} stroke={S} strokeWidth="1.3" /><path d="M1 12h11" stroke={S} /><path d="M12 8h11M17 16h6M17 8v14" stroke={K} /></>],
  ["Map", <><circle cx="13" cy="10" r="7.500" fill="#fff" stroke={K} strokeWidth="1.2" /><path d="M9 5c3-2 6-1 5 2s-4 3-6 2zM15 8c3 0 4 2 3 5s-4 2-4 0zM9 12l3 1-1 3z" fill="#2f9e44" stroke="none" /><path d="M8 1C2 4 1 12 6 17c4 3 9 3 12 0M12 19v3M6 22.500h13" stroke={K} strokeWidth="1.4" /></>],
  ["Filled map", <><path d="M1 3l7-1 5 1 6-1 4 2v11l-4 2-7 5-5-5-5-1V9z" fill={Gy} stroke={Gs} /><path d="M1 3h9l2 5-4 3H2z" fill={B} stroke={S} /><path d="M13 11h10v4l-5 1-5 6-1-5z" fill={B} stroke={S} /></>],
  ["Azure map", <><path d="M15 0L1 22l10-5z" fill="#4db4e6" stroke="none" /><path d="M15 0l6 24-10-8z" fill="#2477b8" stroke="none" /><path d="M15 0l-4 16-10 6z" fill="#3c9fd0" stroke="none" /></>],
  ["Gauge", <><path d="M1 17C1 2 23 2 23 17h-6c0-7-10-7-10 0z" fill="#fff" stroke={K} strokeWidth="1.3" /><path d="M8 7c7-3 15 1 15 10h-6c0-3-2-5-5-5z" fill={B} stroke={S} /><path d="M11 18l7-7" stroke={K} strokeWidth="2.5" /></>],
  ["Card", <><rect x="1" y="4" width="22" height="16" fill="#fff" stroke={K} strokeWidth="1.3" /><text x="12" y="14" fontSize="10" textAnchor="middle" fill={S} stroke="none">123</text><path d="M4 17h16" stroke={Gs} /></>],
  ["Multi-row card", <><rect x="1.500" y="1.500" width="21" height="21" fill="#fff" stroke={K} strokeWidth="1.3" /><path d="M5 4v15" stroke={K} /><path d="M7 8h12M7 15h12" stroke={S} strokeWidth="2" /><path d="M7 11h7M7 18h7" stroke={Gs} /></>],
  ["KPI", <><rect x="1" y="3" width="22" height="17" fill="#fff" stroke={K} strokeWidth="1.3" /><path d="M4 14l4-7 4 7z" fill="#5db075" stroke="#2f9e44" /><path d="M12 7h8l-4 7z" fill="#ef5350" stroke="#d13438" /><path d="M4 17h16" stroke={Gs} /></>],
  ["Slicer", <><rect x="1" y="2" width="22" height="20" fill="#fff" stroke={K} strokeWidth="1.3" /><path d="M1 4h22" stroke={Gy} strokeWidth="3" /><path d="M5 9h4v4H5zM5 15h4v4H5z" fill={Gy} stroke={K} /><path d="M12 12h12l-4 5v7h-4v-7z" fill="#fff" stroke={K} strokeWidth="1.3" /></>],
  ["Table", <><rect x="1" y="2" width="22" height="21" fill="#fff" stroke={K} strokeWidth="1.3" /><path d="M1.500 4h21" stroke={Gy} strokeWidth="3" /><path d="M1 6h22M1 12h22M1 17h22M8 6v17M16 6v17" stroke={Gs} /></>],
  ["Matrix", <><rect x="1" y="2" width="22" height="21" fill="#fff" stroke={K} strokeWidth="1.3" /><path d="M1.500 4h21" stroke={Gy} strokeWidth="3" /><path d="M14 6h8.500v16.500H1.500V17H14z" fill={B} stroke="none" /><path d="M1 6h22M1 12h22M1 17h22M8 6v17M15 6v17" stroke={S} /></>],
  ["R script visual", <text x="5" y="20" fontSize="21" fontWeight="600" fill="#1a7fc3" stroke="none">R</text>],
  ["Python visual", <text x="0" y="18" fontSize="21" fontWeight="600" fill="#1a7fc3" stroke="none">Py</text>],
  ["Key influencers", <><path d="M1 6h16" stroke={S} strokeWidth="1.5" /><circle cx="19" cy="6" r="3" fill={B} stroke={S} /><path d="M1 12h11M1 17h7" stroke={Gs} /><circle cx="14" cy="12" r="1.700" fill={Gy} stroke={Gs} /><circle cx="9" cy="17" r="1.700" fill={Gy} stroke={Gs} /><Ax /></>],
  ["Decomposition tree", <><path d="M9 12h6M12 4v17M12 4h4M12 20h4" stroke={K} strokeWidth="1.3" /><path d="M1 9.500h8v5H1zM15 1.500h8v5.500h-8zM15 9.500h8v5h-8zM15 17h8v5h-8z" fill={B} stroke={S} /></>],
  ["Q&A", <path d="M1 2.500h22v13H11l-5 5v-5H1z" fill="#fff" stroke={S} strokeWidth="1.3" />],
  ["Smart narrative", <><path d="M3 7V2h12l6 6v15H3V14" fill="#fff" stroke={K} strokeWidth="1.3" /><path d="M15 2v6h6" stroke={K} /><circle cx="3" cy="10.500" r="2.500" fill={B} stroke={S} /><path d="M8 12h9M6 16h7" stroke="#2b88d8" /></>],
  ["Metrics", <><path d="M6 2h12c0 9 1 12-6 14-7-2-6-5-6-14z" fill="#fff" stroke={K} strokeWidth="1.4" /><path d="M6 4H1c0 5 2 7 6 7M18 4h5c0 5-2 7-6 7M12 16v4" stroke={K} strokeWidth="1.3" /><path d="M6 2h12v2.500H6zM8 20h8l1 3H6z" fill={B} stroke={S} /></>],
  ["Paginated report", <><path d="M3 1.500h12l6 6V24H3z" fill="#fff" stroke={K} strokeWidth="1.4" /><path d="M15 1.500v6h6" stroke={K} /><path d="M8 21v-6M12 21v-4M16.500 21V12" stroke={K} strokeWidth="2.5" /></>],
  ["Card (new)", <><rect x="2" y="5" width="21" height="16" fill="#fff" stroke={K} strokeWidth="1.3" /><text x="14" y="16" fontSize="10" textAnchor="middle" fill={S} stroke="none">123</text><path d="M5 18h15" stroke={Gs} /><path d="M4 0h7L8 5h3l-9 9 2-7H0z" fill="#ffc65c" stroke="#d8700f" /></>],
  ["ArcGIS map", <><path d="M3 2h20v20H3z" fill="#fff" stroke={S} strokeWidth="1.3" /><path d="M8 22l3-6 5-2 1-6 6-3" stroke={B} strokeWidth="4" /><path d="M0 3c2-4 7-3 8 1 0 4-3 5-4 9-1-4-5-6-4-10z" fill="#d8700f" stroke="none" /><circle cx="4" cy="4.500" r="1.500" fill="#fff" stroke="none" /><circle cx="20" cy="20" r="3.500" fill="#d8700f" stroke="none" /><circle cx="22" cy="14" r="2" fill="#d8700f" stroke="none" /></>],
  ["Power Apps", <path d="M1 12L9.500 2.500h5L23 12l-8.500 10h-5zM9.500 2.500L15 8l-9 9M14.500 2.500L9 8l9.500 9M9.500 12l5 5-5 5M14.500 12l-5 5 5 5" stroke="#8f3a9c" strokeWidth="1.3" />],
  ["Power Automate", <path d="M1 3h13l9 9-9 10H1l9-10zM4 7h9M7 15L18 6M5 20L20 9" stroke="#1a7fd4" strokeWidth="1.5" fill="none" />],
];

function Chevrons() {
  return (
    <svg className="h-4 w-4" viewBox="0 0 16 16" fill="none" stroke="#323130" strokeWidth="1.3" aria-hidden="true">
      <path d="M1 .5L8 8l-7 7.500M8 .5L15 8l-7 7.500" />
    </svg>
  );
}

function Toggle({ label, on }: { label: string; on?: boolean }) {
  return (
    <label className="flex h-[34px] items-center justify-between pr-[27px] pl-[15px]">
      {label}
      <input type="checkbox" role="switch" defaultChecked={on} className="sr-only" />
      {on ? (
        <span className="flex h-5 w-10 items-center justify-between rounded-full bg-[#117865] pr-1.5 pl-1.5 text-[11px] text-white">
          On<span className="h-2.5 w-2.5 rounded-full bg-white" />
        </span>
      ) : (
        <span className="flex h-5 w-10 items-center justify-between rounded-full border border-[#8a8886] bg-white pr-[5px] pl-[5px] text-[11px] text-[#605e5c]">
          <span className="h-2.5 w-2.5 rounded-full bg-[#605e5c]" />Off
        </span>
      )}
    </label>
  );
}

function VisualizationsPane() {
  return (
    <aside className="flex w-[226px] shrink-0 flex-col border-l border-[#e1dfdd] bg-[#f3f2f1] text-sm text-[#323130]">
      <div className="flex items-center justify-between pt-[13px] pr-2.5 pl-2.5">
        <h2 className="text-lg leading-6 font-semibold text-[#252423]">Visualizations</h2>
        <button type="button" aria-label="Collapse visualizations"><Chevrons /></button>
      </div>
      <h3 className="mt-[11px] pl-2.5 leading-5 text-[#252423]">Build visual</h3>
      <div className="mt-1 flex gap-11 pl-2.5">
        <button type="button" aria-label="Build visual" className="flex h-10 w-10 items-center justify-center rounded-sm bg-[#d2d0ce]">
          <svg className="h-8 w-8" viewBox="0 0 32 32" fill="#117865" stroke="#201f1e" strokeWidth="1.3" aria-hidden="true">
            <path d="M1 1.500h24" />
            <path d="M1.500 8h29v9h-29zM1.500 21h29v9h-29z" strokeDasharray="2 1.500" strokeWidth="1.6" />
          </svg>
        </button>
        <button type="button" aria-label="Format visual" className="flex h-10 w-10 items-center justify-center">
          <svg className="h-8 w-8" viewBox="0 0 32 32" fill="none" stroke="#323130" strokeWidth="1.4" aria-hidden="true">
            <path d="M6 30H1V1.500h13l8 9V13M14 1.500v9h8" />
            <path d="M30 13L18 23l3 3c4-4 7-8 9-13zM18 23c-3 0-4 2-5 4l-4 3c5 1 11 1 12-4z" />
          </svg>
        </button>
      </div>
      <svg className="mt-1.5 h-2.5 w-full" viewBox="0 0 225 10" preserveAspectRatio="none" fill="none" stroke="#8a8886" aria-hidden="true">
        <path d="M0 9.500h20L30 .5l10 9h185" />
      </svg>
      <div className="mt-[13px] grid grid-cols-6 gap-[11px] pr-3 pl-3.5">
        {gallery.map(([name, art]) => (
          <button key={name} type="button" aria-label={name}>
            <svg className="h-6 w-6 overflow-visible" viewBox="0 0 24 24" fill="none" stroke={K} aria-hidden="true">{art}</svg>
          </button>
        ))}
        <button type="button" aria-label="More visuals">
          <svg className="h-6 w-6" viewBox="0 0 24 24" fill="#323130" aria-hidden="true">
            <circle cx="4" cy="9" r="1.100" /><circle cx="12" cy="9" r="1.100" /><circle cx="19" cy="9" r="1.100" />
          </svg>
        </button>
      </div>
      <div className="mt-[11px] border-t border-[#e1dfdd] pt-[11px]">
        <h3 className="pl-[15px] leading-5">Values</h3>
        <p className="mt-1.5 mr-[7px] ml-[5px] rounded-sm border border-dashed border-[#c8c6c4] bg-white pl-3 leading-[33px]">Add data fields here</p>
        <h3 className="mt-[13px] mb-[5px] pl-[15px] leading-5 font-medium text-[#484644]">Drill through</h3>
        <Toggle label="Cross-report" />
        <Toggle label="Keep all filters" on />
        <p className="mt-[6px] mr-[7px] ml-[5px] rounded-sm border border-dashed border-[#c8c6c4] bg-white pl-2.5 leading-[30px] whitespace-nowrap">Add drill-through fields here</p>
      </div>
    </aside>
  );
}

function DataPane() {
  return (
    <aside className="flex w-[226px] shrink-0 flex-col border-l border-[#e1dfdd] bg-[#f3f2f1] text-sm text-[#323130]">
      <div className="flex items-center justify-between pt-[13px] pr-2.5 pl-2.5">
        <h2 className="text-lg leading-6 font-semibold text-[#252423]">Data</h2>
        <button type="button" aria-label="Collapse data"><Chevrons /></button>
      </div>
      <label className="mt-5 mr-[5px] ml-[5px] flex h-[33px] items-center gap-[7px] rounded-sm border border-[#8a8886] bg-white pl-2">
        <svg className="h-5 w-5 shrink-0" viewBox="0 0 20 20" fill="none" stroke="#323130" strokeWidth="1.3" aria-hidden="true">
          <circle cx="12.500" cy="7.500" r="6" /><path d="M8 12l-7 7" />
        </svg>
        <input type="text" aria-label="Search" placeholder="Search" className="w-full min-w-0 text-base outline-none placeholder:text-[#605e5c]" />
      </label>
      <ul className="mt-[11px] text-[#484644]">
        {["CreditCard", "fraudulentactivities"].map((n) => (
          <li key={n}>
            <button type="button" className="flex h-[30px] items-center pl-[11px]">
              <svg className="mr-2 h-4 w-2" viewBox="0 0 8 16" fill="none" stroke="#605e5c" strokeWidth="1.2" aria-hidden="true"><path d="M.5 1l7 7-7 7" /></svg>
              <svg className="mr-[7px] h-4 w-[17px]" viewBox="0 0 17 16" fill="none" stroke="#484644" strokeWidth="1.2" aria-hidden="true">
                <path d="M1 1h15v14H1zM1 3h15M1 7h15M1 11h15M6 3v12M11 3v12" />
              </svg>
              {n}
            </button>
          </li>
        ))}
      </ul>
    </aside>
  );
}

function PageTabs() {
  return (
    <div className="flex h-11 shrink-0 items-start bg-[#f3f2f1]">
      <button type="button" aria-label="Desktop layout" className="ml-[62px] flex w-[30px] flex-col items-center pt-2">
        <svg className="h-5 w-[26px]" viewBox="0 0 26 20" fill="none" stroke="#201f1e" strokeWidth="1.5" aria-hidden="true">
          <path d="M1 1h24v13H1zM13 14v4M9 18h8" />
        </svg>
        <span className="mt-[6px] h-1 w-full rounded-full bg-[#117865]" />
      </button>
      <button type="button" aria-label="Mobile layout" className="ml-8 pt-1.5">
        <svg className="h-[26px] w-4" viewBox="0 0 16 26" fill="none" stroke="#484644" strokeWidth="1.5" aria-hidden="true">
          <rect x="1" y="1" width="14" height="24" rx="1.500" /><path d="M6.500 21.500h3" />
        </svg>
      </button>
      <button type="button" aria-label="Previous page" disabled className="ml-[27px] pt-4">
        <svg className="h-3 w-1.5" viewBox="0 0 6 12" fill="#c8c6c4" aria-hidden="true"><path d="M6 0v12L0 6z" /></svg>
      </button>
      <button type="button" aria-label="Next page" disabled className="ml-[22px] pt-4">
        <svg className="h-3 w-1.5" viewBox="0 0 6 12" fill="#c8c6c4" aria-hidden="true"><path d="M0 0v12l6-6z" /></svg>
      </button>
      <button type="button" className="ml-2 h-11 w-[95px] border-b-[5px] border-l border-b-[#117865] border-l-[#a19f9d] bg-white pt-0.5 text-sm text-[#201f1e]">Page 1</button>
      <button type="button" aria-label="New page" className="mt-0.5 flex h-10 w-[49px] items-center justify-center bg-[#117865]">
        <svg className="h-3.5 w-3.5" viewBox="0 0 14 14" stroke="#fff" strokeWidth="4" aria-hidden="true"><path d="M7 0v14M0 7h14" /></svg>
      </button>
    </div>
  );
}

function StatusBar() {
  return (
    <footer className="flex h-[29px] shrink-0 items-center border-t border-[#e1dfdd] bg-[#f3f2f1] pr-6 pl-[7px] text-sm text-[#605e5c]">
      <span className="mr-auto">Page 1 of 1</span>
      <button type="button" aria-label="Zoom out">
        <svg className="h-2.5 w-1.5" viewBox="0 0 6 10" stroke="#605e5c" strokeWidth="2" aria-hidden="true"><path d="M0 5.500h6" /></svg>
      </button>
      <div className="relative ml-[5px] flex h-[14px] w-[125px] items-center">
        <input
          type="range"
          aria-label="Zoom"
          defaultValue={41}
          className="h-[14px] w-full appearance-none bg-linear-to-b from-transparent from-45% via-[#605e5c] via-45% to-transparent to-55% [&::-webkit-slider-thumb]:h-[13px] [&::-webkit-slider-thumb]:w-[5px] [&::-webkit-slider-thumb]:appearance-none [&::-webkit-slider-thumb]:bg-[#605e5c]"
        />
        <span className="absolute left-[62px] h-2 w-0.5 bg-[#605e5c]" />
      </div>
      <button type="button" aria-label="Zoom in" className="ml-[7px]">
        <svg className="h-2.5 w-2.5" viewBox="0 0 10 10" stroke="#605e5c" strokeWidth="2" aria-hidden="true"><path d="M5 0v10M0 5h10" /></svg>
      </button>
      <span className="ml-[21px] w-[48px]">83%</span>
      <button type="button" aria-label="Fit to page">
        <svg className="h-4 w-5" viewBox="0 0 20 16" fill="none" stroke="#605e5c" strokeWidth="1.5" aria-hidden="true">
          <path d="M1 1h18v14H1z" /><path d="M4 6V4h3M13 4h3v2M16 10v2h-3M7 12H4v-2" />
        </svg>
      </button>
    </footer>
  );
}

/* ---------- Taskbar ---------- */

const Chrome = ({ children }: { children: React.ReactNode }) => (
  <>
    <circle cx="15" cy="17" r="15" fill="#fbc116" />
    <path d="M15 17L2 9.500A15 15 0 0128 9.500H15z" fill="#ea4335" />
    <path d="M2 9.500A15 15 0 0015 32l6.500-11.200L15 17 8.500 20.700z" fill="#34a04a" />
    <path d="M15 17V9.500h13A15 15 0 0115 32l6.500-11z" fill="#fbc116" />
    <circle cx="15" cy="17" r="7.500" fill="#fff" />
    <circle cx="15" cy="17" r="6" fill="#3b7bf0" />
    {children}
  </>
);

const apps: [string, React.ReactNode, string?][] = [
  ["Task view", <><path d="M7 2h22v20H7z" fill="#f0f0f0" /><path d="M0 12h18v18H0z" fill="#6b6b6b" /><path d="M7 12h11v10H7z" fill="#b9b9b9" /></>],
  ["Chat", <><path d="M15 2a14 14 0 11-5 27l-9 2 2-8A14 14 0 0115 2z" fill="#6a6bd0" /><path d="M7 11h11v10H7zM18 14l5-3v10l-5-3z" fill="#fff" /></>],
  ["Mail", <><path d="M0 12L15 1l15 11v19H0z" fill="#1272c4" /><path d="M3 12h24v10H3z" fill="#e8eef4" /><path d="M0 12l15 11L30 12v19H0z" fill="#38b6f0" /><path d="M0 31l15-12 15 12z" fill="#1b8fe0" /><circle cx="26" cy="5" r="10" fill="#d9a0e6" /><text x="26" y="10" fontSize="13" textAnchor="middle" fill="#222">9</text></>],
  ["File Explorer", <><path d="M0 6c0-2 1-3 3-3h8l4 4h14v8H0z" fill="#e0a01a" /><path d="M0 8h30v20c0 1-1 2-2 2H2c-1 0-2-1-2-2z" fill="#fcc938" /><path d="M5 30v-5c0-2 1-3 3-3h14c2 0 3 1 3 3v5z" fill="#1b7fd4" /><path d="M10 26h10" stroke="#0d4f8c" strokeWidth="1.5" /></>, "dot"],
  ["Store", <><path d="M8 7V2h14v5" fill="none" stroke="#3fb8f5" strokeWidth="2" /><path d="M1 6h28v23c0 1-1 2-2 2H3c-1 0-2-1-2-2z" fill="#f2f2f2" /><path d="M9 13h5.500v5.500H9z" fill="#f25022" /><path d="M15.500 13H21v5.500h-5.500z" fill="#7fba00" /><path d="M9 19.500h5.500V25H9z" fill="#00a4ef" /><path d="M15.500 19.500H21V25h-5.500z" fill="#ffb900" /></>],
  ["Edge", <><defs><linearGradient id="edge-top" x1="0" x2="1" y1="0" y2=".3"><stop offset=".3" stopColor="#2fb4e8" /><stop offset="1" stopColor="#66dd5a" /></linearGradient></defs><path d="M0 13C4-4 29-3 30 14c0 7-8 8-11 5 2-8-8-12-19-6z" fill="url(#edge-top)" /><path d="M0 14c7-7 18-4 19 3-5-4-9 0-8 4 2 6 10 8 17 5-5 7-19 8-25-3-2-3-3-6-3-9z" fill="#1277cf" /><path d="M11 19c1 7 9 10 17 7-3 5-8 6-13 5-4-2-5-8-4-12z" fill="#0d4f9e" /><circle cx="7" cy="24" r="7" fill="#c9c5c2" /><circle cx="7" cy="22" r="2.500" fill="#77706c" /><path d="M2.500 28c1-4 8-4 9 0-2 2-7 2-9 0z" fill="#77706c" /></>],
  ["WhatsApp", <><path d="M15 3a13 13 0 11-6 25l-7 2 2-7A13 13 0 0115 3z" fill="#40c351" stroke="#fff" strokeWidth="2.2" /><path d="M10 9c-3 2-1 7 3 10 4 4 8 4 9 1l-3-3-3 1c-1-1-3-3-3-4l1-2-2-3z" fill="#fff" /></>],
  ["YouTube", <><rect x="0" y="6" width="30" height="21" rx="5" fill="#f00" /><path d="M12 12l8 4.500-8 4.500z" fill="#fff" /></>],
  ["Facebook", <><circle cx="15" cy="16" r="15" fill="#0f7ff2" /><path d="M12.500 26V18H9v-4h3.500v-3c0-4 2-5.500 8-4.500v3.500c-3 0-4 0-4 2V14H20.500l-.7 4h-3.300v8z" fill="#fff" /></>],
  ["Chrome, work profile", <Chrome><circle cx="26" cy="5" r="10" fill="#0e8f96" /><text x="26" y="10" fontSize="12" textAnchor="middle" fill="#cfeff0">S</text></Chrome>, "dot"],
  ["Chrome, home profile", <Chrome><circle cx="26" cy="5" r="10" fill="#c65a80" /><path d="M22-3l5 5-4 6 6 6M30-3l-2 6 5 5" stroke="#f8dfe6" strokeWidth="2" fill="none" /><path d="M19 2l4 5M30 8l-3 5" stroke="#4a1a30" strokeWidth="2" /></Chrome>, "dot"],
  ["Power BI", <><path d="M17 1h10v30H17z" fill="#d9950f" /><path d="M10 8h10v23H10z" fill="#efc12c" /><path d="M3 16h10v15H3z" fill="#f7dc6a" /></>, "active"],
];

function Taskbar() {
  return (
    <footer className="grid h-[61px] shrink-0 grid-cols-[1fr_auto_1fr] items-center border-t border-black bg-[linear-gradient(90deg,#1c1a2c_0%,#211a3c_12%,#1f1650_23%,#231f2e_29%,#3a122e_38%,#3d1048_50%,#341544_58%,#241e26_66%,#221b20_78%,#2a161d_100%)] font-['Open_Sans','Noto_Sans',sans-serif] text-sm text-white">
      <button type="button" className="flex items-center gap-2 pl-6 text-left">
        <svg className="h-8 w-8" viewBox="0 0 32 32" fill="none" aria-hidden="true">
          <circle cx="17" cy="14" r="11" fill="#f9a825" />
          <path d="M1 13h18M4 19h26M10 25h16" stroke="#f5c469" strokeWidth="3" strokeLinecap="round" />
        </svg>
        <span className="leading-5">27°C<br /><span className="text-[#d0ccd4]">Haze</span></span>
      </button>
      <div className="flex items-center">
        <button type="button" aria-label="Start" className="flex w-[55px] justify-center">
          <svg className="h-[30px] w-[30px]" viewBox="0 0 30 30" fill="#38b4f5" aria-hidden="true">
            <path d="M0 0h14v14H0zM16 0h14v14H16zM0 16h14v14H0zM16 16h14v14H16z" />
          </svg>
        </button>
        <label className="mr-0.5 ml-1 flex h-10 w-[275px] items-center rounded-full border border-[#5b5560] bg-[#423c4c] pr-1 pl-3.5">
          <svg className="h-5 w-5 shrink-0" viewBox="0 0 20 20" fill="none" stroke="#fff" strokeWidth="2" aria-hidden="true">
            <circle cx="8.500" cy="8" r="6.500" /><path d="M13 13l6 6" />
          </svg>
          <input type="text" aria-label="Taskbar search" placeholder="Search" className="ml-3 min-w-0 flex-1 text-base outline-none placeholder:text-[#d6d3da]" />
          <svg className="h-8 w-[60px]" viewBox="0 0 60 32" aria-hidden="true">
            <ellipse cx="29" cy="26" rx="28" ry="5" fill="#d9b48a" />
            <path d="M6 12l9 2 12-4 4 15-11 4-12-2z" fill="#eef6ee" />
            <path d="M15 14l5 14" stroke="#7aa58c" strokeWidth="1.5" />
            <path d="M8 15l5 1M9 19l6 1M18 16l7-2M20 20l7-2" stroke="#8cc8a0" />
            <path d="M22 16L29 3l4 2-7 13-5 2z" fill="#f3b13c" />
            <path d="M29 3l4 2 1-3-3-1z" fill="#e2557c" />
            <path d="M38 28V10c0-12 18-12 18 0v18z" fill="#1767d8" />
            <path d="M42 10h10v6H42zM38 22c6 4 12 4 18 0v6H38z" fill="#3fa3f5" />
            <path d="M1 5h6M4 2v6" stroke="#c77dff" strokeWidth="2" />
            <circle cx="58" cy="6" r="1.500" fill="#f5a623" />
          </svg>
        </label>
        {apps.map(([name, art, state]) => (
          <button
            key={name}
            type="button"
            aria-label={name}
            className={`relative flex h-[50px] w-[55px] items-center justify-center rounded-md ${state === "active" ? "bg-white/8" : ""}`}
          >
            <svg className="h-8 w-[30px] overflow-visible" viewBox="0 0 30 32" aria-hidden="true">{art}</svg>
            {state === "dot" && <span className="absolute bottom-0 h-1 w-2 rounded-full bg-[#a19aa3]" />}
            {state === "active" && <span className="absolute bottom-0 h-1 w-5 rounded-full bg-[#dd9de8]" />}
          </button>
        ))}
      </div>
      <div className="flex items-center justify-end pr-[25px]">
        <button type="button" aria-label="Hidden icons">
          <svg className="h-4 w-4" viewBox="0 0 16 16" fill="none" stroke="#fff" strokeWidth="1.6" aria-hidden="true"><path d="M2 11l6-6 6 6" /></svg>
        </button>
        <svg className="ml-[22px] h-[18px] w-5" viewBox="0 0 20 18" aria-hidden="true">
          <path d="M5 14a4 4 0 010-8c2-5 9-4 10 1 5 0 5 7 1 7z" fill="#8d8890" />
          <path d="M2 2l16 15" stroke="#fff" strokeWidth="1.3" />
        </svg>
        <span className="ml-[23px] text-center leading-5">ENG<br />IN</span>
        <button type="button" aria-label="Network, volume and battery" className="ml-6 flex items-center gap-2.5">
          <svg className="h-4 w-5" viewBox="0 0 20 16" fill="none" stroke="#fff" strokeWidth="1.6" aria-hidden="true">
            <path d="M1 6c5-6 13-6 18 0M4 9c4-4 8-4 12 0M7 12c2-2 4-2 6 0" /><circle cx="10" cy="14" r="1.500" fill="#fff" stroke="none" />
          </svg>
          <svg className="h-5 w-5" viewBox="0 0 20 20" fill="none" stroke="#fff" strokeWidth="1.4" aria-hidden="true">
            <path d="M1 7.500h3l5-4.500v14l-5-4.500H1zM12 7c1 2 1 4 0 6M14.500 5c2 3 2 7 0 10M17 3c3 5 3 9 0 14" />
          </svg>
          <svg className="h-3.5 w-5" viewBox="0 0 20 14" fill="none" stroke="#fff" strokeWidth="1.3" aria-hidden="true">
            <rect x="1" y="1.500" width="16" height="11" rx="2.500" /><path d="M3 4h8v6H3z" fill="#fff" /><path d="M19 5v4" />
          </svg>
        </button>
        <span className="ml-5 text-right text-[15px] leading-5">18:50<br />22-09-2023</span>
        <span className="ml-2 flex h-5 w-5 items-center justify-center rounded-full bg-[#dd9de8] text-[11px] text-[#222]">1</span>
      </div>
    </footer>
  );
}

export default function App() {
  return (
    <div className="flex h-screen flex-col overflow-hidden bg-[#f3f2f1] font-['Open_Sans','Noto_Sans',sans-serif]">
      <TitleBar />
      <MenuTabs />
      <Ribbon />
      <div className="flex min-h-0 flex-1">
        <div className="flex min-w-0 flex-1 flex-col">
          <div className="flex min-h-0 flex-1">
            <SideNav />
            <Report />
            <FiltersPane />
          </div>
          <PageTabs />
        </div>
        <VisualizationsPane />
        <DataPane />
      </div>
      <StatusBar />
      <Taskbar />
    </div>
  );
}
